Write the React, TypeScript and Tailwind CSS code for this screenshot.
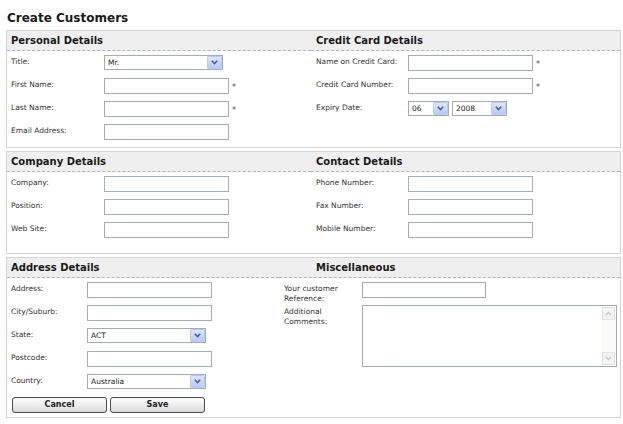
import type { ReactNode } from 'react';

function Arrow() {
  return (
    <div className="flex h-[13px] w-[15px] items-center justify-center rounded-[1px] border border-[#b9cbf3] bg-gradient-to-b from-[#dce6fd] to-[#b7cbf8]">
      <svg width="7" height="5" viewBox="0 0 7 5">
        <path d="M0.8 0.8 L3.5 3.6 L6.2 0.8" fill="none" stroke="#4d6185" strokeWidth="1.6" />
      </svg>
    </div>
  );
}

function TextBox({ className = 'w-[125px]', req = false }: { className?: string; req?: boolean }) {
  return (
    <div className="flex items-start">
      <div className={`h-[16px] border border-[#a5acb2] bg-white ${className}`} />
      {req && <span className="ml-[3px] pt-[5px] text-[8px] leading-[10px] text-[#555]">*</span>}
    </div>
  );
}

function Select({ value, className }: { value: string; className: string }) {
  return (
    <div className={`flex h-[15px] items-center justify-between border border-[#a5acb2] bg-white pl-[3px] ${className}`}>
      <span className="text-[7.5px] leading-[10px] text-[#222]">{value}</span>
      <Arrow />
    </div>
  );
}

function Row({ label, labelW, children }: { label: ReactNode; labelW: string; children: ReactNode }) {
  return (
    <div className="flex h-[23px] items-start">
      <div className={`${labelW} shrink-0 pt-[2px] text-[7.5px] leading-[10px] text-[#333]`}>{label}</div>
      {children}
    </div>
  );
}

function Heading({ title, pad }: { title: string; pad: string }) {
  return (
    <div className={`flex h-[20px] items-center border-b border-dashed border-[#b4b4b4] bg-[#efefef] ${pad}`}>
      <span className="text-[10px] font-bold text-[#1a1a1a]">{title}</span>
    </div>
  );
}

function Button({ label }: { label: string }) {
  return (
    <button className="flex h-[16px] w-[95px] items-center justify-center rounded-[3px] border border-[#4a4a4a] bg-gradient-to-b from-white to-[#dadada] text-[8px] font-bold text-[#222]">
      {label}
    </button>
  );
}

export default function App() {
  return (
    <div className="min-h-screen bg-white pl-[6px] pr-[2px] pt-[11px] font-['DejaVu_Sans','Verdana',sans-serif]">
      <h1 className="mb-[5px] pl-[1px] text-[12px] font-bold leading-[14px] text-[#1a1a1a]">Create Customers</h1>

      {/* Personal / Credit card */}
      <div className="flex border border-[#d4d4d4]">
        <div className="w-[304px]">
          <Heading title="Personal Details" pad="pl-[4px]" />
          <div className="pl-[4px] pt-[4px]">
            <Row label="Title:" labelW="w-[93px]">
              <Select value="Mr." className="w-[119px]" />
            </Row>
            <Row label="First Name:" labelW="w-[93px]">
              <TextBox req />
            </Row>
            <Row label="Last Name:" labelW="w-[93px]">
              <TextBox req />
            </Row>
            <Row label="Email Address:" labelW="w-[93px]">
              <TextBox />
            </Row>
          </div>
        </div>
        <div className="flex-1">
          <Heading title="Credit Card Details" pad="pl-[5px]" />
          <div className="pl-[5px] pt-[4px]">
            <Row label="Name on Credit Card:" labelW="w-[92px]">
              <TextBox req />
            </Row>
            <Row label="Credit Card Number:" labelW="w-[92px]">
              <TextBox req />
            </Row>
            <Row label="Expiry Date:" labelW="w-[92px]">
              <div className="flex gap-[3px]">
                <Select value="06" className="w-[41px]" />
                <Select value="2008" className="w-[55px]" />
              </div>
            </Row>
          </div>
        </div>
      </div>

      {/* Company / Contact */}
      <div className="mt-[3px] flex border border-[#d4d4d4] pb-[8px]">
        <div className="w-[304px]">
          <Heading title="Company Details" pad="pl-[4px]" />
          <div className="pl-[4px] pt-[4px]">
            <Row label="Company:" labelW="w-[93px]">
              <TextBox />
            </Row>
            <Row label="Position:" labelW="w-[93px]">
              <TextBox />
            </Row>
            <Row label="Web Site:" labelW="w-[93px]">
              <TextBox />
            </Row>
          </div>
        </div>
        <div className="flex-1">
          <Heading title="Contact Details" pad="pl-[5px]" />
          <div className="pl-[5px] pt-[4px]">
            <Row label="Phone Number:" labelW="w-[92px]">
              <TextBox />
            </Row>
            <Row label="Fax Number:" labelW="w-[92px]">
              <TextBox />
            </Row>
            <Row label="Mobile Number:" labelW="w-[92px]">
              <TextBox />
            </Row>
          </div>
        </div>
      </div>

      {/* Address / Misc */}
      <div className="mt-[3px] flex border border-[#d4d4d4]">
        <div className="w-[272px]">
          <Heading title="Address Details" pad="pl-[4px]" />
          <div className="pl-[4px] pt-[4px]">
            <Row label="Address:" labelW="w-[76px]">
              <TextBox />
            </Row>
            <Row label="City/Suburb:" labelW="w-[76px]">
              <TextBox />
            </Row>
            <Row label="State:" labelW="w-[76px]">
              <Select value="ACT" className="w-[119px]" />
            </Row>
            <Row label="Postcode:" labelW="w-[76px]">
              <TextBox />
            </Row>
            <Row label="Country:" labelW="w-[76px]">
              <Select value="Australia" className="w-[119px]" />
            </Row>
            <div className="flex h-[20px] items-start gap-[3px] pl-[1px]">
              <Button label="Cancel" />
              <Button label="Save" />
            </div>
          </div>
        </div>
        <div className="flex-1">
          <Heading title="Miscellaneous" pad="pl-[37px]" />
          <div className="pl-[5px] pt-[4px]">
            <Row label="Your customer Reference:" labelW="w-[78px] pr-[10px]">
              <TextBox className="w-[124px]" />
            </Row>
            <Row label="Additional Comments:" labelW="w-[78px] pr-[10px]">
              <div className="flex h-[62px] w-[255px] justify-end border border-[#a5acb2] bg-white">
                <div className="flex w-[15px] flex-col justify-between bg-[#fbfbf9] p-[1px]">
                  <div className="flex h-[13px] items-center justify-center rounded-[1px] border border-[#e2e2e2] bg-[#f4f4f2]">
                    <svg width="7" height="5" viewBox="0 0 7 5">
                      <path d="M0.8 4.2 L3.5 1.4 L6.2 4.2" fill="none" stroke="#c9c9c9" strokeWidth="1.4" />
                    </svg>
                  </div>
                  <div className="flex h-[13px] items-center justify-center rounded-[1px] border border-[#e2e2e2] bg-[#f4f4f2]">
                    <svg width="7" height="5" viewBox="0 0 7 5">
                      <path d="M0.8 0.8 L3.5 3.6 L6.2 0.8" fill="none" stroke="#c9c9c9" strokeWidth="1.4" />
                    </svg>
                  </div>
                </div>
              </div>
            </Row>
          </div>
        </div>
      </div>
    </div>
  );
}
